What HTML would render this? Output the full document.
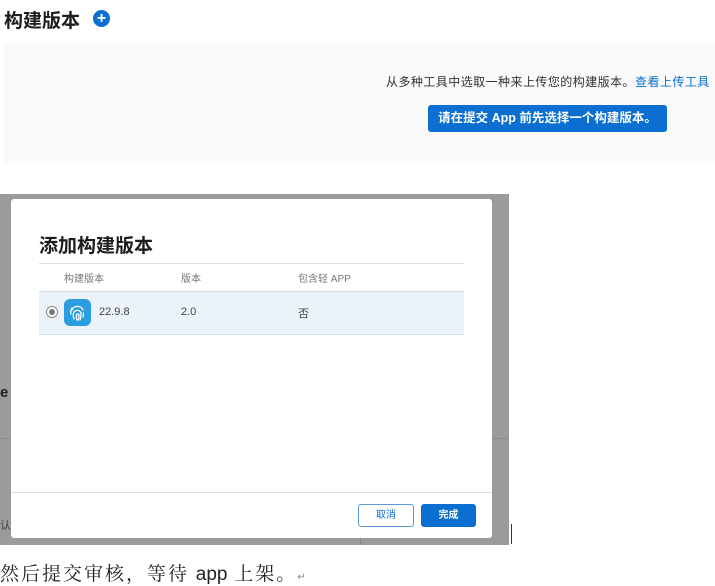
<!DOCTYPE html>
<html><head><meta charset="utf-8"><style>
body{margin:0;width:715px;height:585px;background:#fff;position:relative;overflow:hidden;font-family:"Liberation Sans","Noto Sans CJK SC",sans-serif;}
.a{position:absolute;}
</style></head><body>
<div class="a" style="left:4px;top:6px;font-size:19px;font-weight:bold;color:#1d1d1f;">构建版本</div>
<div class="a" style="left:93px;top:10px;width:17px;height:17px;border-radius:50%;background:#0a6fd0;color:#fff;font-size:16px;font-weight:bold;line-height:17px;text-align:center;">+</div>
<div class="a" style="left:4px;top:43px;width:711px;height:120px;background:#f9f9f9;"></div>
<div class="a" style="left:386px;top:73px;font-size:12px;letter-spacing:0.45px;color:#333;white-space:nowrap;">从多种工具中选取一种来上传您的构建版本。<span style="color:#0a6fd0">查看上传工具</span></div>
<div class="a" style="left:428px;top:105px;width:239px;height:27px;background:#0a6fd0;border-radius:3px;color:#fff;font-size:12.5px;font-weight:bold;line-height:27px;text-align:center;">请在提交 App 前先选择一个构建版本。</div>

<div class="a" style="left:0;top:194px;width:509px;height:351px;background:#9b9b9b;"></div>
<div class="a" style="left:0;top:438px;width:509px;height:1px;background:#8c8c8c;"></div>
<div class="a" style="left:0;top:384px;font-size:15px;font-weight:bold;color:#222;">e</div>
<div class="a" style="left:0;top:517px;font-size:11px;color:#444;">认使</div>
<div class="a" style="left:360px;top:525px;width:1px;height:20px;background:#888;"></div>
<div class="a" style="left:11px;top:199px;width:481px;height:339px;background:#fff;border-radius:3px;"></div>
<div class="a" style="left:39px;top:231px;font-size:19px;font-weight:bold;color:#1d1d1f;">添加构建版本</div>
<div class="a" style="left:39px;top:263px;width:425px;height:1px;background:#ddd;"></div>
<div class="a" style="left:64px;top:270px;font-size:10px;color:#777;">构建版本</div>
<div class="a" style="left:181px;top:270px;font-size:10px;color:#777;">版本</div>
<div class="a" style="left:298px;top:270px;font-size:10px;color:#777;">包含轻 APP</div>
<div class="a" style="left:39px;top:291px;width:425px;height:42px;background:#ebf2fa;border-top:1px solid #d5dde6;border-bottom:1px solid #d5dde6;"></div>
<div class="a" style="left:46px;top:306px;width:10px;height:10px;border-radius:50%;border:1px solid #888;background:#fff;"></div>
<div class="a" style="left:49px;top:309px;width:6px;height:6px;border-radius:50%;background:#777;"></div>
<div class="a" style="left:64px;top:299px;width:27px;height:27px;border-radius:6px;background:#2a9ee0;">
<svg width="27" height="27" viewBox="0 0 27 27" fill="none" stroke="#fff" stroke-width="1.3" stroke-linecap="round"><path d="M8 11a6 6 0 0 1 11 0M7 15a7 7 0 0 1 1-6M10 20c-1-2-1-5 0-7a4 4 0 0 1 7 1c0 3 0 5-1 7M13 21c-1-2-1-4 0-6a1.5 1.5 0 0 1 2 1c0 2 0 4-1 5M19 18c.5-1 .5-3 .3-4"/></svg></div>
<div class="a" style="left:99px;top:306px;font-size:11px;color:#444;">22.9.8</div>
<div class="a" style="left:181px;top:306px;font-size:11px;color:#444;">2.0</div>
<div class="a" style="left:298px;top:305px;font-size:11px;color:#444;">否</div>
<div class="a" style="left:11px;top:492px;width:481px;height:1px;background:#ddd;"></div>
<div class="a" style="left:358px;top:504px;width:54px;height:21px;border:1px solid #5a9ad8;border-radius:3px;color:#0a6fd0;font-size:10px;line-height:21px;text-align:center;">取消</div>
<div class="a" style="left:421px;top:504px;width:55px;height:23px;background:#0a6fd0;border-radius:3px;color:#fff;font-size:10px;font-weight:bold;line-height:23px;text-align:center;">完成</div>
<div class="a" style="left:511px;top:524px;width:1px;height:20px;background:#333;"></div>
<div class="a" style="left:0;top:559px;font-size:19px;color:#222;font-family:'Liberation Serif','Noto Serif CJK SC',serif;letter-spacing:2px;white-space:nowrap;">然后提交审核，等待 <span style="font-family:'Liberation Sans',sans-serif;letter-spacing:0">app</span> 上架。<span style="font-size:10px;color:#888">↵</span></div>
</body></html>
